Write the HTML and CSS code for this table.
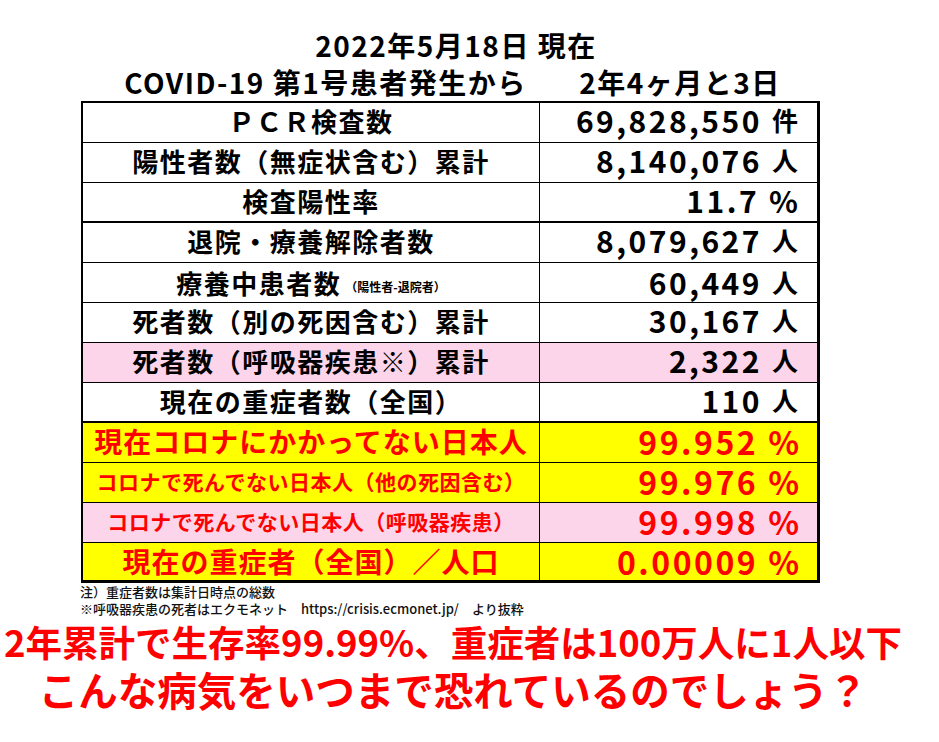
FILE: index.html
```html
<!DOCTYPE html>
<html lang="ja">
<head>
<meta charset="utf-8">
<link rel="stylesheet" href="styles.css">
</head>
<body>
<div class="page">
  <div class="title1">2022年5月18日 現在</div>
  <div class="title2">
    <div class="t2l">COVID-19 第1号患者発生から</div>
    <div class="t2r">2年4ヶ月と3日</div>
  </div>
  <div class="tbl">
    <div class="row"><div class="lab">ＰＣＲ検査数</div><div class="val">69,828,550<span class="u">件</span></div></div>
    <div class="row"><div class="lab">陽性者数（無症状含む）累計</div><div class="val">8,140,076<span class="u">人</span></div></div>
    <div class="row thick"><div class="lab">検査陽性率</div><div class="val">11.7<span class="u pct">%</span></div></div>
    <div class="row"><div class="lab">退院・療養解除者数</div><div class="val">8,079,627<span class="u">人</span></div></div>
    <div class="row"><div class="lab">療養中患者数<span class="small">（陽性者-退院者）</span></div><div class="val">60,449<span class="u">人</span></div></div>
    <div class="row"><div class="lab">死者数（別の死因含む）累計</div><div class="val">30,167<span class="u">人</span></div></div>
    <div class="row pink"><div class="lab">死者数（呼吸器疾患※）累計</div><div class="val">2,322<span class="u">人</span></div></div>
    <div class="row thick"><div class="lab">現在の重症者数（全国）</div><div class="val">110<span class="u">人</span></div></div>
    <div class="row yellow red"><div class="lab big">現在コロナにかかってない日本人</div><div class="val bigv">99.952<span class="u pct">%</span></div></div>
    <div class="row yellow red"><div class="lab mid">コロナで死んでない日本人（他の死因含む）</div><div class="val bigv">99.976<span class="u pct">%</span></div></div>
    <div class="row pink red"><div class="lab mid">コロナで死んでない日本人（呼吸器疾患）</div><div class="val bigv">99.998<span class="u pct">%</span></div></div>
    <div class="row yellow red last"><div class="lab big">現在の重症者（全国）／人口</div><div class="val bigv">0.00009<span class="u pct">%</span></div></div>
  </div>
  <div class="notes">
    <div>注）重症者数は集計日時点の総数</div>
    <div>※呼吸器疾患の死者はエクモネット　https://crisis.ecmonet.jp/　より抜粋</div>
  </div>
  <div class="msg">
    <div class="m1">2年累計で生存率99.99%、重症者は100万人に1人以下</div>
    <div class="m2">こんな病気をいつまで恐れているのでしょう？</div>
  </div>
</div>
</body>
</html>
```

FILE: styles.css
```css
* { box-sizing: border-box; }
html, body { margin: 0; padding: 0; background: #fff; }
body {
  font-family: "Noto Sans CJK JP", "Noto Sans", sans-serif;
  font-weight: 700;
  color: #000;
  width: 939px;
  height: 742px;
  overflow: hidden;
}
.page {
  width: 906px;
  padding-top: 27px;
}
.title1 {
  text-align: center;
  font-size: 28px;
  line-height: 37px;
  height: 37px;
  padding-left: 6px;
  letter-spacing: 1.5px;
}
.title2 {
  display: grid;
  grid-template-columns: 459px 280px;
  margin-left: 81px;
  font-size: 28px;
  line-height: 37px;
  height: 37px;
  letter-spacing: 1.5px;
}
.t2l { text-align: center; padding-left: 30px; white-space: nowrap; }
.t2r { text-align: center; }
.tbl {
  margin-left: 81px;
  width: 739px;
  border-left: 2px solid #000;
  border-top: 2px solid #000;
  border-right: 3px solid #000;
  border-bottom: 3px solid #000;
}
.row {
  display: grid;
  grid-template-columns: 457px 1fr;
  height: 40px;
  border-bottom: 1px solid #000;
  line-height: 32px;
}
.row.thick { border-bottom: 2px solid #000; }
.row.last { border-bottom: none; height: 37px; }
.row.pink { background: #fdd5ea; }
.row.yellow { background: #ffff00; }
.row.red { color: #ff0000; }
.lab {
  border-right: 1px solid #000;
  display: flex;
  align-items: center;
  justify-content: center;
  font-size: 26px;
  white-space: nowrap;
  letter-spacing: 1.5px;
  padding-bottom: 3px;
}
.lab.big { font-size: 28px; letter-spacing: 1px; }
.lab.mid { font-size: 21px; letter-spacing: 0.5px; }
.small { font-size: 12px; margin-left: 4px; margin-top: 8px; letter-spacing: 0; }
.val {
  display: flex;
  align-items: center;
  justify-content: flex-end;
  padding-right: 19px;
  padding-bottom: 5px;
  font-size: 30px;
  letter-spacing: 2.5px;
  white-space: nowrap;
}
.val.bigv { font-size: 32px; letter-spacing: 2.5px; padding-right: 18px; padding-bottom: 4px; }
.row.last .val, .row.last .lab { padding-bottom: 2px; }
.u {
  font-size: 26px;
  margin-left: 10px;
  letter-spacing: 0;
}
.u.pct { font-size: 30px; }
.bigv .u.pct { font-size: 32px; }
.notes {
  margin-left: 80px;
  margin-top: 0px;
  font-size: 13px;
  line-height: 17px;
  font-weight: 500;
  color: #111;
}
.msg {
  color: #ff0000;
  text-align: center;
  font-size: 38px;
  white-space: nowrap;
}
.m1 { font-size: 36.5px; line-height: 46px; margin-top: 2px; }
.m2 { font-size: 39.5px; line-height: 48px; }
```
